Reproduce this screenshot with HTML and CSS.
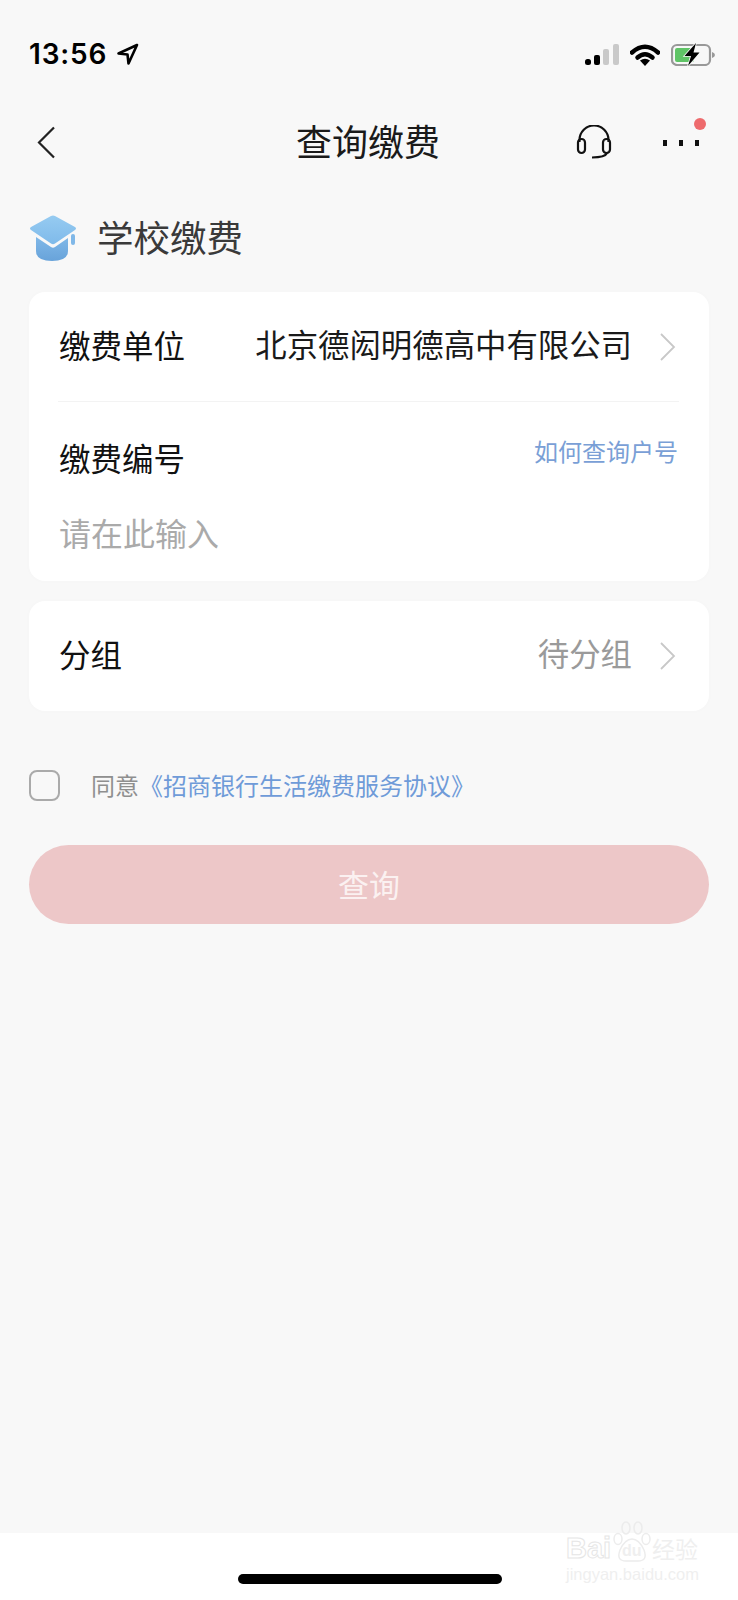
FILE: index.html
```html
<!DOCTYPE html>
<html lang="zh-CN">
<head>
    <meta charset="UTF-8">
    <meta name="viewport" content="width=device-width, initial-scale=1.0">
    <title>查询缴费</title>
    <link rel="stylesheet" href="styles.css">
</head>
<body>
    <div class="page">
        <!-- status bar -->
        <div class="status">
            <div class="status-left">
                <span class="time">13:56</span>
                <svg class="loc" width="23" height="23" viewBox="0 0 23 23">
                    <path d="M21 2 L2.500 10.500 L11.500 11.500 L12.500 20.500 Z" fill="none" stroke="#000" stroke-width="2.600" stroke-linejoin="round"/>
                </svg>
            </div>
            <div class="status-right">
                <svg width="34" height="22" viewBox="0 0 34 22">
                    <rect x="0" y="15" width="6" height="6" rx="2.500" fill="#000"/>
                    <rect x="9" y="11" width="6" height="10" rx="2" fill="#000"/>
                    <rect x="18" y="5" width="6" height="16" rx="2" fill="#c9c9c9"/>
                    <rect x="28" y="0" width="6" height="21" rx="2" fill="#c9c9c9"/>
                </svg>
                <svg width="30" height="22" viewBox="0 0 30 22">
                    <path d="M2 8.500 Q15 -3 28 8.500" fill="none" stroke="#000" stroke-width="4.500" stroke-linecap="round"/>
                    <path d="M7.500 13.500 Q15 7 22.500 13.500" fill="none" stroke="#000" stroke-width="4.500" stroke-linecap="round"/>
                    <path d="M10 16.500 Q15 13 20 16.500 L15 22 Z" fill="#000"/>
                </svg>
                <svg width="45" height="23" viewBox="0 0 45 23">
                    <rect x="1" y="2" width="38" height="20" rx="5" fill="none" stroke="#999" stroke-width="2.200"/>
                    <rect x="4" y="5" width="19" height="14" rx="2" fill="#5fc466"/>
                    <path d="M41 9 Q44 10 44 12 Q44 14 41 15 Z" fill="#999"/>
                    <path d="M25 0 L13.500 13 H20 L17 23 L28.500 9.500 H22.500 Z" fill="#000" stroke="#f8f8f8" stroke-width="1.600" paint-order="stroke"/>
                </svg>
            </div>
        </div>

        <!-- nav -->
        <div class="nav">
            <div class="nav-left">
                <svg width="19" height="33" viewBox="0 0 19 33">
                    <path d="M17 1.500 L2 16.500 L17 31.500" fill="none" stroke="#222" stroke-width="2.200"/>
                </svg>
            </div>
            <div class="nav-title">查询缴费</div>
            <div class="nav-right">
                <svg width="36" height="34" viewBox="0 0 36 34">
                    <path d="M3.500 17 V15 A14.500 14.500 0 0 1 32.500 15 V17" fill="none" stroke="#111" stroke-width="2.200"/>
                    <rect x="2" y="14" width="7" height="14" rx="3.500" fill="none" stroke="#111" stroke-width="2.200"/>
                    <rect x="27" y="14" width="7" height="14" rx="3.500" fill="none" stroke="#111" stroke-width="2.200"/>
                    <path d="M31 28 Q29 32.500 16 32.500" fill="none" stroke="#111" stroke-width="2.200"/>
                </svg>
                <div class="more">
                    <i></i><i></i><i></i>
                    <span class="more-dot"></span>
                </div>
            </div>
        </div>

        <!-- section head -->
        <div class="section">
            <svg width="50" height="48" viewBox="0 0 50 48">
                <defs>
                    <linearGradient id="capTop" x1="0" y1="0" x2="0" y2="1">
                        <stop offset="0" stop-color="#96cbf1"/>
                        <stop offset="1" stop-color="#7fbaea"/>
                    </linearGradient>
                    <linearGradient id="capBody" x1="0" y1="0" x2="0" y2="1">
                        <stop offset="0" stop-color="#80b8e8"/>
                        <stop offset="1" stop-color="#68a3da"/>
                    </linearGradient>
                </defs>
                <path d="M23 2 Q25 1 27 2 L47 13 Q49 14.500 47 16 L27 29.500 Q25 31 23 29.500 L3 16 Q1 14.500 3 13 Z" fill="url(#capTop)"/>
                <path d="M8 23 L23 33 Q25 34.500 27 33 L40 24 V37 Q40 47 24 47 Q8 47 8 37 Z" fill="url(#capBody)"/>
                <rect x="43" y="20" width="4" height="11" rx="2" fill="#80b8e8"/>
            </svg>
            <span class="section-title">学校缴费</span>
        </div>

        <!-- form -->
        <div class="card">
            <div class="row row-line">
                <span class="label">缴费单位</span>
                <div class="row-end">
                    <span class="value">北京德闳明德高中有限公司</span>
                    <svg class="chev" width="17" height="28" viewBox="0 0 17 28">
                        <path d="M2 1 L15 14 L2 27" fill="none" stroke="#c8c8c8" stroke-width="1.800"/>
                    </svg>
                </div>
            </div>
            <div class="number">
                <div class="number-head">
                    <span class="label">缴费编号</span>
                    <a class="link-small">如何查询户号</a>
                </div>
                <div class="placeholder">请在此输入</div>
            </div>
        </div>

        <div class="card card-group">
            <div class="row">
                <span class="label">分组</span>
                <div class="row-end">
                    <span class="value value-muted">待分组</span>
                    <svg class="chev" width="17" height="28" viewBox="0 0 17 28">
                        <path d="M2 1 L15 14 L2 27" fill="none" stroke="#c8c8c8" stroke-width="1.800"/>
                    </svg>
                </div>
            </div>
        </div>

        <div class="agree">
            <span class="checkbox"></span>
            <span class="agree-text">同意<a class="agree-link">《招商银行生活缴费服务协议》</a></span>
        </div>

        <button class="submit" type="button">查询</button>

        <div class="spacer"></div>

        <div class="home">
            <div class="home-bar"></div>
        </div>

        <!-- watermark -->
        <div class="mark">
            <div class="mark-top">
                <span class="mark-bai">Bai</span>
                <div class="mark-paw">
                    <svg width="40" height="43" viewBox="0 0 40 43">
                        <g fill="none" stroke="#ececec" stroke-width="1.500">
                            <ellipse cx="6" cy="19" rx="4" ry="5.500"/>
                            <ellipse cx="14" cy="8" rx="4" ry="6"/>
                            <ellipse cx="26" cy="8" rx="4" ry="6"/>
                            <ellipse cx="34" cy="19" rx="4" ry="5.500"/>
                            <path d="M20 19 Q27 19 32 30 Q36 41 26 41 L14 41 Q4 41 8 30 Q13 19 20 19 Z"/>
                        </g>
                    </svg>
                    <span class="mark-du">du</span>
                </div>
                <span class="mark-cn">经验</span>
            </div>
            <div class="mark-url">jingyan.baidu.com</div>
        </div>
    </div>
</body>
</html>
```

FILE: styles.css
```css
* {
    box-sizing: border-box;
}

html, body {
    margin: 0;
    padding: 0;
}

body {
    font-family: "Noto Sans CJK SC", "Noto Sans", sans-serif;
    color: #111;
}

.page {
    position: relative;
    width: 738px;
    height: 1600px;
    display: flex;
    flex-direction: column;
    background: #f8f8f8;
    overflow: hidden;
}

/* status bar */
.status {
    display: flex;
    justify-content: space-between;
    align-items: center;
    height: 23px;
    margin-top: 43px;
    padding: 0 22px 0 29px;
}

.status-left {
    display: flex;
    align-items: center;
    gap: 9px;
}

.time {
    font-family: Inter, "Liberation Sans", sans-serif;
    font-size: 28px;
    font-weight: 600;
    line-height: 23px;
    color: #000;
    letter-spacing: 0.8px;
}

.status-right {
    display: flex;
    align-items: center;
    gap: 11px;
}

/* nav */
.nav {
    display: grid;
    grid-template-columns: 1fr auto 1fr;
    align-items: center;
    height: 60px;
    margin-top: 46px;
    padding: 0 39px 0 37px;
}

.nav-left {
    display: flex;
}

.nav-title {
    font-size: 36px;
    line-height: 56px;
    padding-bottom: 4px;
    color: #1a1a1a;
}

.nav-right {
    display: flex;
    justify-content: flex-end;
    align-items: center;
    gap: 51px;
}

.more {
    position: relative;
    display: flex;
    gap: 12px;
    padding-top: 2px;
}

.more i {
    display: block;
    width: 4px;
    height: 6px;
    background: #111;
}

.more-dot {
    position: absolute;
    top: -20px;
    right: -7px;
    width: 12px;
    height: 12px;
    border-radius: 50%;
    background: #ee6b6d;
}

/* section head */
.section {
    display: flex;
    align-items: center;
    gap: 19px;
    height: 48px;
    margin-top: 42px;
    padding-left: 28px;
}

.section-title {
    font-size: 36.500px;
    line-height: 46px;
    padding-bottom: 2px;
    color: #3a3a3a;
}

/* cards */
.card {
    margin: 30px 29px 0 29px;
    background: #fff;
    border-radius: 16px;
    padding: 0 30px 0 29px;
    box-shadow: 0 0 6px rgba(0, 0, 0, 0.015);
}

.card-group {
    margin-top: 20px;
}

.row {
    display: flex;
    justify-content: space-between;
    align-items: center;
    height: 110px;
    padding: 0 3px 6px 1px;
}

.row-line {
    border-bottom: 1px solid #f3f3f3;
}

.label {
    font-size: 31.500px;
    line-height: 44px;
    color: #111;
}

.row-end {
    display: flex;
    align-items: center;
    gap: 27px;
}

.value {
    font-size: 31.400px;
    line-height: 44px;
    color: #1a1a1a;
}

.value-muted {
    color: #9a9a9a;
}

.chev {
    margin-top: 6px;
}

.number {
    height: 179px;
    padding: 33px 1px 0 1px;
}

.number-head {
    display: flex;
    justify-content: space-between;
    align-items: flex-start;
}

.link-small {
    font-size: 24px;
    line-height: 32px;
    color: #7a9fd6;
}

.placeholder {
    margin-top: 31px;
    font-size: 32px;
    line-height: 44px;
    color: #aaa;
}

/* agreement */
.agree {
    display: flex;
    align-items: center;
    gap: 31px;
    margin: 59px 0 0 29px;
    height: 31px;
}

.checkbox {
    width: 31px;
    height: 31px;
    border: 2px solid #aaa;
    border-radius: 8px;
}

.agree-text {
    font-size: 24px;
    line-height: 29px;
    padding-bottom: 2px;
    color: #8f8f8f;
}

.agree-link {
    color: #6f9bd8;
}

/* button */
.submit {
    display: block;
    width: 680px;
    height: 79px;
    margin: 44px 0 0 29px;
    padding: 0 0 2px;
    border: none;
    border-radius: 40px;
    background: #edc7c8;
    font-family: inherit;
    font-size: 31px;
    color: #fbf1f1;
}

.spacer {
    flex: 1;
}

/* home indicator */
.home {
    height: 67px;
    padding-top: 41px;
    background: #fff;
}

.home-bar {
    width: 264px;
    height: 10px;
    margin-left: 238px;
    border-radius: 5px;
    background: #000;
}

/* watermark */
.mark {
    position: absolute;
    left: 566px;
    top: 1520px;
    width: 134px;
    color: #efefef;
}

.mark-top {
    display: flex;
    align-items: flex-end;
    height: 43px;
}

.mark-bai {
    width: 46px;
    font-family: "Liberation Sans", sans-serif;
    font-size: 29px;
    line-height: 30px;
    font-weight: 700;
    color: #fff;
    -webkit-text-stroke: 1px #e6e6e6;
}

.mark-paw {
    position: relative;
    width: 40px;
    height: 43px;
}

.mark-du {
    position: absolute;
    left: 10px;
    bottom: 3px;
    font-family: "Liberation Sans", sans-serif;
    font-size: 16px;
    line-height: 18px;
    font-weight: 700;
}

.mark-cn {
    font-size: 23px;
    line-height: 30px;
}

.mark-url {
    margin-top: 3px;
    font-family: "Liberation Sans", sans-serif;
    font-size: 16.500px;
    line-height: 17px;
    white-space: nowrap;
}
```
